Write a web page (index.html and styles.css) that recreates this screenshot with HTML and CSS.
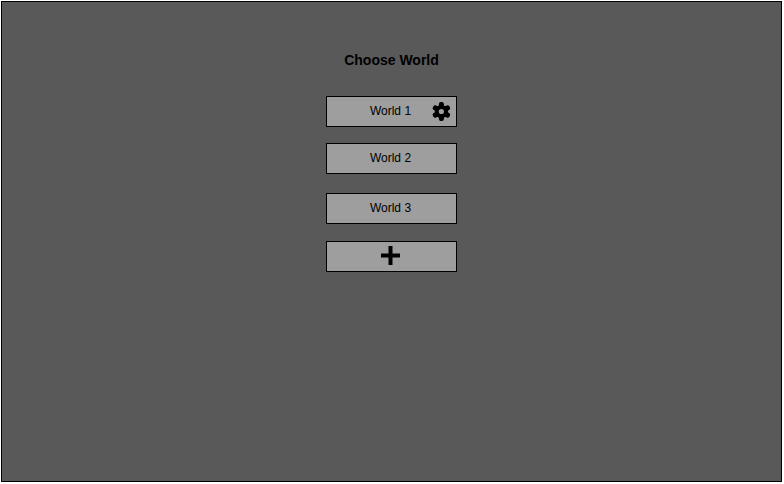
FILE: index.html
```html
<!DOCTYPE html>
<html lang="en">
<head>
<meta charset="utf-8">
<title>Choose World</title>
<link rel="stylesheet" href="styles.css">
</head>
<body>
<main class="screen">
<h1 class="title">Choose World</h1>
<div class="worlds">
<div class="world">World 1
<svg class="gear" viewBox="-10.4 -10.5 20 20"><circle r="6.6"/><g><rect x="-2.5" y="-9.5" width="5" height="19" rx="2"/><rect x="-2.5" y="-9.5" width="5" height="19" rx="2" transform="rotate(60)"/><rect x="-2.5" y="-9.5" width="5" height="19" rx="2" transform="rotate(120)"/></g><circle r="2.6" fill="#9e9e9e"/></svg></div>
<div class="world">World 2</div>
<div class="world world-third">World 3</div>
<div class="world world-add"><svg class="plus" viewBox="0 0 19 19"><path d="M7.5 0h4v7.5H19v4h-7.500V19h-4v-7.500H0v-4h7.500z"/></svg></div>
</div>
</main>
</body>
</html>
```
FILE: styles.css
```css
* { box-sizing: border-box; }
body { margin: 0; background: #fff; font-family: "Liberation Sans", Arial, sans-serif; color: #000; }
.screen { width: 781px; height: 481px; margin: 1px; border: 1px solid #000; background: #595959; display: flex; flex-direction: column; align-items: center; padding-top: 50px; }
.title { margin: 0; font-size: 14px; line-height: 17px; font-weight: bold; }
.worlds { width: 131px; margin-top: 27px; display: flex; flex-direction: column; gap: 16px; }
.world { height: 31px; border: 1px solid #000; background: #9e9e9e; display: flex; align-items: center; justify-content: center; font-size: 12px; line-height: 14px; padding: 0 2px 2px 0; position: relative; }
.world-third { margin-top: 3px; }
.world-add { margin-top: 1px; }
.gear { position: absolute; right: 5px; top: 4px; width: 20px; height: 20px; }
.plus { width: 19px; height: 19px; }
```
